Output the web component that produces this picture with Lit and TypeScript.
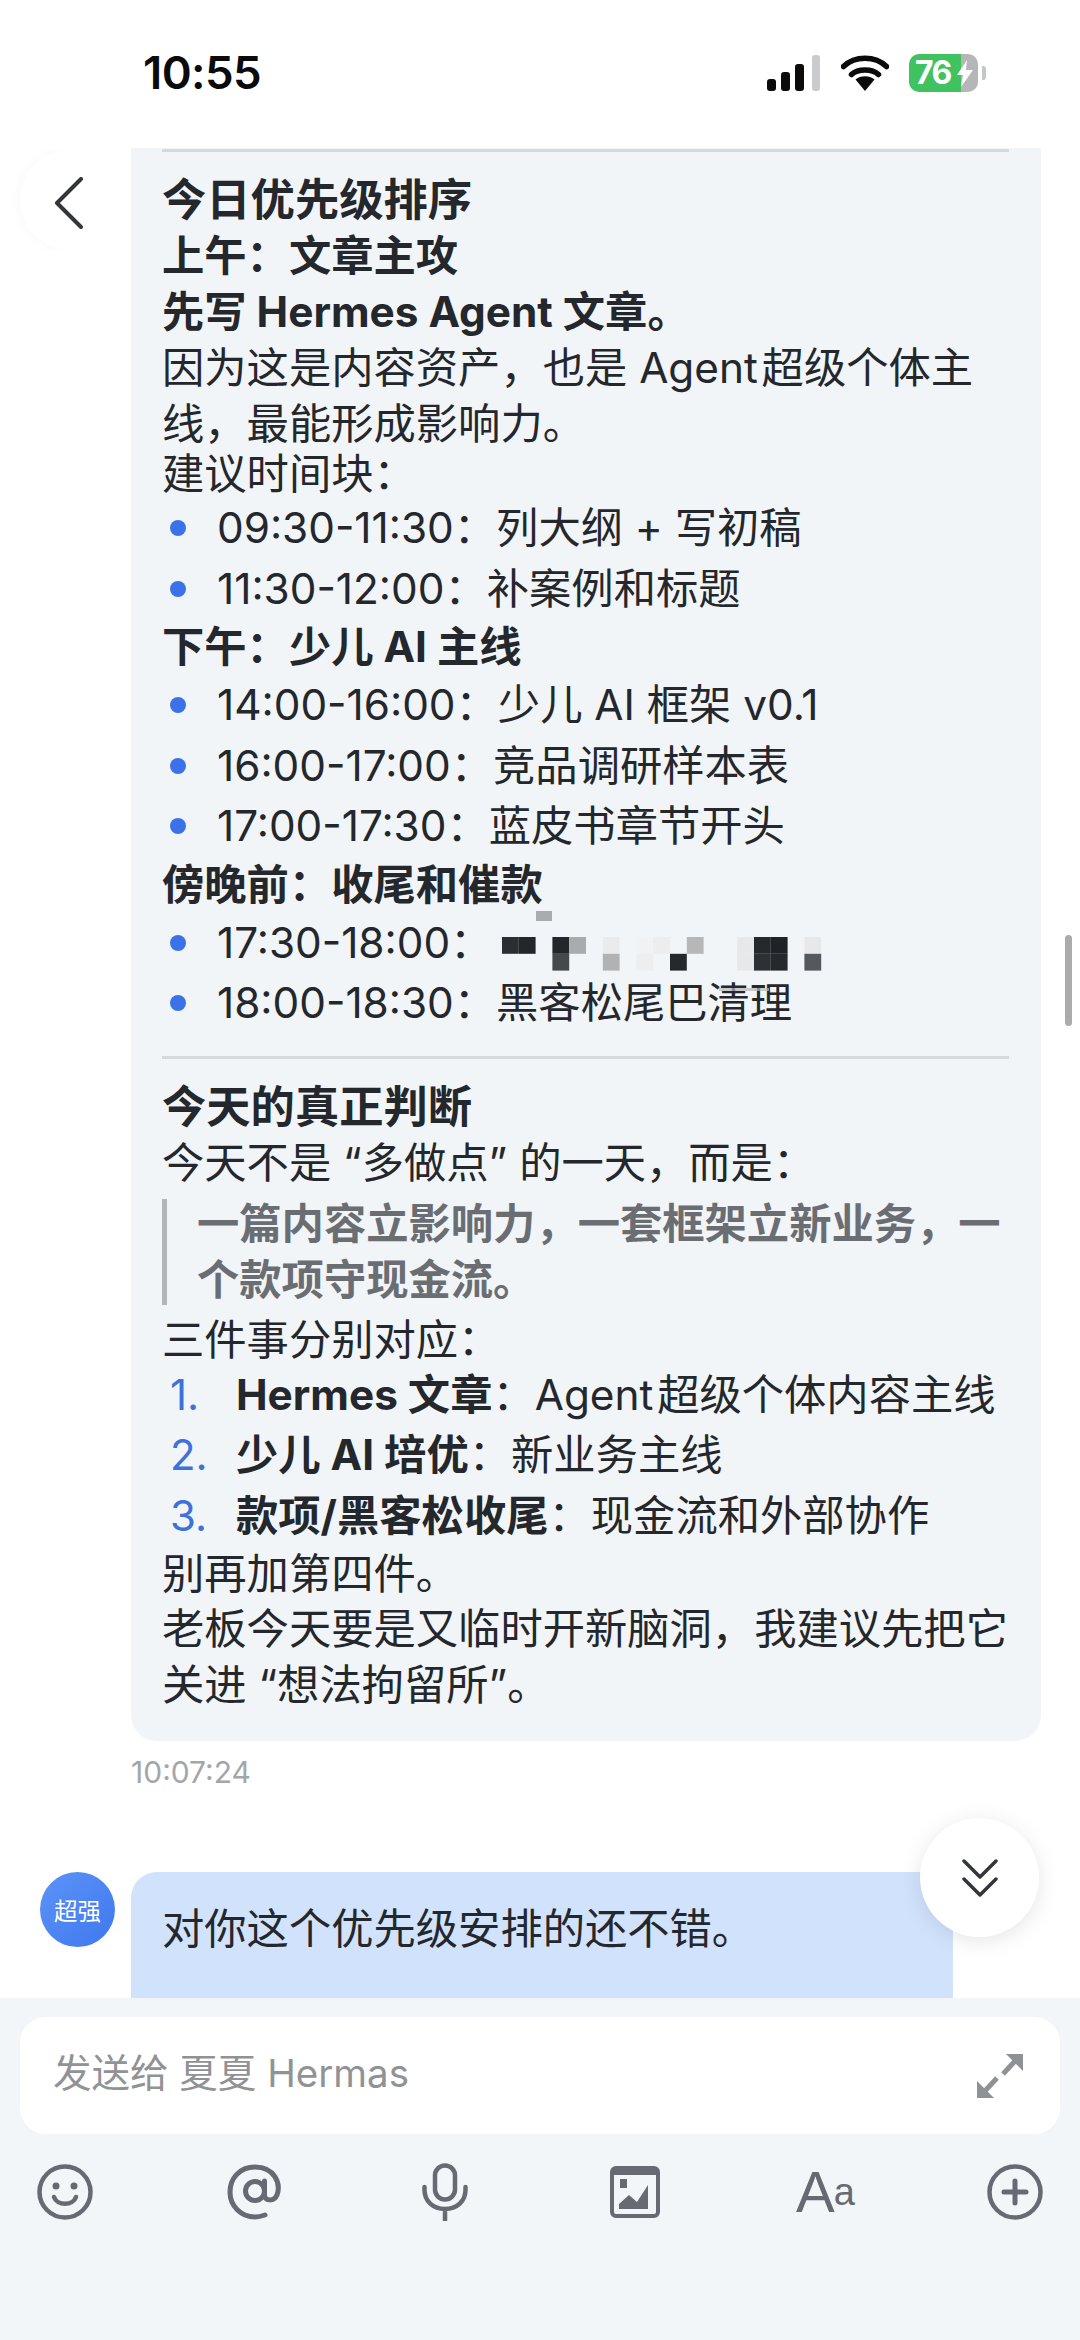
import { LitElement, html, css, svg } from "lit";
import { customElement } from "lit/decorators.js";

const mosaic: [number, number, string][] = [
  [0, 0, "#2b2e33"], [1, 0, "#23262b"], [3, 0, "#23262b"], [3, 1, "#45484c"], [4, 0, "#a9abad"],
  [6, 0, "#e9ebed"], [6, 1, "#b0b2b4"], [8, 0, "#f0f2f4"], [8, 1, "#eceef0"], [9, 0, "#ebedef"],
  [10, 1, "#25282d"], [11, 0, "#b5b7b9"], [14, 0, "#e6e8ea"], [14, 1, "#e6e8ea"], [15, 0, "#25282d"],
  [15, 1, "#2d3035"], [16, 0, "#1f2227"], [16, 1, "#25282d"], [18, 0, "#e6e8ea"], [18, 1, "#55585c"],
];

@customElement("app-root")
export class AppRoot extends LitElement {
  static styles = css`
    :host {
      display: block;
      width: 1080px;
      height: 2340px;
      position: relative;
      overflow: hidden;
      background: #fff;
      color: #24272c;
      font-family: Inter, "Noto Sans CJK SC", sans-serif;
    }
    .page { display: flex; flex-direction: column; height: 2340px; }
    .status {
      flex: 0 0 148px;
      display: flex;
      justify-content: space-between;
      align-items: flex-start;
      padding: 53px 94px 0 143px;
      box-sizing: border-box;
    }
    .time { font-size: 45.500px; line-height: 40px; font-weight: 600; color: #0b0b0c; letter-spacing: -0.6px; }
    .sicons { display: flex; align-items: center; gap: 20px; height: 40px; }
    .battery {
      position: relative;
      width: 69px;
      height: 38px;
      border-radius: 10px;
      background: linear-gradient(90deg, #3fc25f 0 76%, #b4b6b8 76%);
      color: #fff;
      font-size: 32px;
      font-weight: 700;
      line-height: 38px;
      padding-left: 6px;
      box-sizing: border-box;
      letter-spacing: -1.500px;
    }
    .bolt { position: absolute; left: 47px; top: 6px; }
    .cap { width: 4px; height: 14px; border-radius: 0 3px 3px 0; background: #c4c6c8; margin-left: -16px; }
    .msgs { flex: 1; min-height: 0; overflow: hidden; }
    .bubble-wrap { margin: 0 39px 0 131px; }
    .bubble {
      background: #f1f5f8;
      border-radius: 0 0 26px 26px;
      padding: 1px 31px 3px;
      height: 1593px;
      box-sizing: border-box;
      font-size: 42.300px;
      line-height: 56px;
    }
    hr { border: 0; height: 3px; background: #d6d9dc; margin: 0 1px 0 0; }
    .h { font-size: 44.300px; font-weight: 700; }
    .b { font-weight: 700; }
    .p { white-space: nowrap; }
    .first { margin-top: 20px; }
    .tight { margin-top: -6px; }
    ul, ol { list-style: none; margin: 0; padding: 0; }
    li { display: flex; align-items: center; height: 60.500px; white-space: pre; }
    .ul-first { margin-top: -4px; }
    .dot { width: 16px; height: 16px; border-radius: 50%; background: #3c72e8; margin: 0 31px 0 8px; flex: none; }
    .num { width: 74px; flex: none; color: #3f72d8; font-size: 42px; padding-left: 8px; box-sizing: border-box; }
    .sec { margin-top: 0; }
    .late { margin-top: 0; }
    .hr2 { margin-top: 22px; }
    .h2 { margin-top: 20px; }
    .quote {
      border-left: 5px solid #b3b6b9;
      padding-left: 30px;
      margin: 8px 0 7px;
      color: #6a6e73;
      font-weight: 700;
      font-size: 42.300px;
      line-height: 56px;
      height: 106px;
      display: flex;
      flex-direction: column;
      justify-content: center;
    }
    .nums { margin-top: -3px; }
    .after { margin-top: -1px; }
    .stamp { font-size: 30px; line-height: 36px; color: #a3a6a9; margin: 13px 0 0 131px; }
    .row { display: flex; margin-top: 82px; }
    .avatar {
      width: 75px;
      height: 75px;
      margin: 0 16px 0 40px;
      border-radius: 50%;
      background: linear-gradient(135deg, #5c93f8, #3f78ee);
      color: #fff;
      font-size: 23.500px;
      display: flex;
      align-items: center;
      justify-content: center;
      flex: none;
    }
    .mine {
      width: 822px;
      height: 200px;
      border-radius: 26px 26px 0 0;
      background: #d1e2fd;
      padding: 29px 31px;
      box-sizing: border-box;
      font-size: 42.300px;
      line-height: 56px;
    }
    .composer { flex: 0 0 342px; background: #f2f6f8; padding: 19px 20px 0; box-sizing: border-box; }
    .input {
      height: 117px;
      width: 1040px;
      background: #fff;
      border-radius: 26px;
      display: flex;
      align-items: center;
      justify-content: space-between;
      padding: 0 36px 0 33px;
      box-sizing: border-box;
      color: #909396;
      font-size: 38.500px;
    }
    .ph { padding-bottom: 12px; }
    .tools {
      display: flex;
      justify-content: space-between;
      align-items: center;
      margin: 29px 17px 0 17px;
      height: 58px;
      color: #666a72;
    }
    .tool { width: 56px; height: 58px; display: flex; align-items: center; justify-content: center; }
    .aa { font-family: "Liberation Sans", sans-serif; line-height: 58px; white-space: nowrap; letter-spacing: -1px; }
    .aa .A { font-size: 58px; }
    .aa .a { font-size: 38px; }
    .back {
      position: absolute;
      left: 20px;
      top: 150px;
      width: 100px;
      height: 100px;
      border-radius: 50%;
      box-shadow: -3px 0 12px rgba(0, 0, 0, 0.025);
      background: #fff;
      clip-path: inset(0 50px 0 -20px);
    }
    .chev { position: absolute; left: 54px; top: 177px; }
    .godown {
      position: absolute;
      left: 920px;
      top: 1818px;
      width: 119px;
      height: 119px;
      border-radius: 50%;
      background: #fff;
      box-shadow: 0 4px 22px rgba(0, 0, 0, 0.1);
      display: flex;
      align-items: center;
      justify-content: center;
    }
    .scroll { position: absolute; left: 1065px; top: 935px; width: 7px; height: 91px; border-radius: 4px; background: #a9abad; }
    .mosaic { position: absolute; left: 502px; top: 905px; }
  `;

  li(t: string, rest: string) {
    return html`<li><span class="dot"></span>${t}：${rest}</li>`;
  }

  render() {
    const c = 16.8;
    return html`
      <div class="page">
        <div class="status">
          <div class="time">10:55</div>
          <div class="sicons">
            <svg width="54" height="36" viewBox="0 0 54 36">
              <rect x="0" y="24" width="9" height="12" rx="3" fill="#0b0b0c" />
              <rect x="14" y="17" width="9" height="19" rx="3" fill="#0b0b0c" />
              <rect x="28" y="9" width="9" height="27" rx="3" fill="#0b0b0c" />
              <rect x="45" y="0" width="8" height="36" rx="3" fill="#c9cbcd" />
            </svg>
            <svg width="48" height="36" viewBox="0 0 48 36" fill="none">
              <path d="M2.500 11.500C14 0.500 34 0.500 45.500 11.500" stroke="#0b0b0c" stroke-width="5.500" stroke-linecap="round" />
              <path d="M10.500 19.500C17 13.500 31 13.500 37.500 19.500" stroke="#0b0b0c" stroke-width="5.500" stroke-linecap="round" />
              <path d="M14.500 24.500C19 20 29 20 33.500 24.500L24 36Z" fill="#0b0b0c" />
            </svg>
            <div class="battery">76<svg class="bolt" width="18" height="27" viewBox="0 0 18 27"><path d="M11 0L1 15h6L5 27 17 10h-7z" fill="#fff" /></svg></div>
            <div class="cap"></div>
          </div>
        </div>
        <div class="msgs">
          <div class="bubble-wrap">
            <div class="bubble">
              <hr />
              <div class="p h first">今日优先级排序</div>
              <div class="p b">上午：文章主攻</div>
              <div class="p b">先写 Hermes Agent 文章。</div>
              <div class="p">因为这是内容资产，也是 Agent\u200a超级个体主</div>
              <div class="p">线，最能形成影响力。</div>
              <div class="p tight">建议时间块：</div>
              <ul class="ul-first">
                ${this.li("09:30-11:30", "列大纲 + 写初稿")}
                ${this.li("11:30-12:00", "补案例和标题")}
              </ul>
              <div class="p b sec">下午：少儿 AI 主线</div>
              <ul>
                ${this.li("14:00-16:00", "少儿 AI 框架 v0.1")}
                ${this.li("16:00-17:00", "竞品调研样本表")}
                ${this.li("17:00-17:30", "蓝皮书章节开头")}
              </ul>
              <div class="p b late">傍晚前：收尾和催款</div>
              <ul>
                ${this.li("17:30-18:00", "")}
                ${this.li("18:00-18:30", "黑客松尾巴清理")}
              </ul>
              <hr class="hr2" />
              <div class="p h h2">今天的真正判断</div>
              <div class="p">今天不是 “多做点” 的一天，而是：</div>
              <div class="quote">
                <div class="p">一篇内容立影响力，一套框架立新业务，一</div>
                <div class="p">个款项守现金流。</div>
              </div>
              <div class="p">三件事分别对应：</div>
              <ol class="nums">
                <li><span class="num">1.</span><span class="b">Hermes 文章</span>：Agent\u200a超级个体内容主线</li>
                <li><span class="num">2.</span><span class="b">少儿 AI 培优</span>：新业务主线</li>
                <li><span class="num">3.</span><span class="b">款项/黑客松收尾</span>：现金流和外部协作</li>
              </ol>
              <div class="p">别再加第四件。</div>
              <div class="p after">老板今天要是又临时开新脑洞，我建议先把它</div>
              <div class="p">关进 “想法拘留所”。</div>
            </div>
          </div>
          <div class="stamp">10:07:24</div>
          <div class="row">
            <div class="avatar">超强</div>
            <div class="mine">对你这个优先级安排的还不错。</div>
          </div>
        </div>
        <div class="composer">
          <div class="input">
            <span class="ph">发送给 夏夏 Hermas</span>
            <svg width="48" height="46" viewBox="0 0 48 46" fill="#8f9295" stroke="none">
              <path d="M30 1H47V18Z" />
              <path d="M1 28V45H18Z" />
              <path d="M40 7L27 21M8 39L21 25" fill="none" stroke="#8f9295" stroke-width="5" />
            </svg>
          </div>
          <div class="tools">
            <div class="tool">
              <svg width="56" height="56" viewBox="0 0 56 56" fill="none" stroke="currentColor" stroke-width="4.500">
                <circle cx="28" cy="28" r="25.500" />
                <circle cx="19" cy="22" r="3.500" fill="currentColor" stroke="none" />
                <circle cx="37" cy="22" r="3.500" fill="currentColor" stroke="none" />
                <path d="M17 33C20 42 36 42 39 33" stroke-linecap="round" />
              </svg>
            </div>
            <div class="tool">
              <svg width="56" height="56" viewBox="0 0 56 56" fill="none" stroke="currentColor" stroke-width="5">
                <circle cx="28" cy="27" r="9.500" />
                <path d="M37.500 17V31C37.500 37 47 38 50 31C54 20 48 3 28 3C12 3 3 15 3 28C3 42 14 53 28 53C32 53 35 52 38 51" stroke-linecap="round" />
              </svg>
            </div>
            <div class="tool">
              <svg width="46" height="58" viewBox="0 0 46 58" fill="none" stroke="currentColor" stroke-width="4.500">
                <rect x="13" y="2.500" width="20" height="34" rx="10" />
                <path d="M2.500 24V27C2.500 38 11 46 23 46C35 46 43.500 38 43.500 27V24M23 46V57" stroke-linecap="round" />
              </svg>
            </div>
            <div class="tool">
              <svg width="50" height="52" viewBox="0 0 50 52">
                <rect x="2" y="2" width="46" height="48" rx="4" fill="none" stroke="currentColor" stroke-width="4" />
                <rect x="2" y="2" width="46" height="7" fill="currentColor" />
                <rect x="10" y="13" width="7" height="9" fill="currentColor" />
                <path d="M9 43V38L19 29L27 36L38 19V43Z" fill="currentColor" />
              </svg>
            </div>
            <div class="tool aa"><span class="A">A</span><span class="a">a</span></div>
            <div class="tool">
              <svg width="56" height="56" viewBox="0 0 56 56" fill="none" stroke="currentColor" stroke-width="4.500">
                <circle cx="28" cy="28" r="25.500" />
                <path d="M28 17V39M17 28H39" stroke-width="5" stroke-linecap="round" />
              </svg>
            </div>
          </div>
        </div>
      </div>
      <div class="back"></div>
      <svg class="chev" width="30" height="52" viewBox="0 0 30 52" fill="none" stroke="#33363b" stroke-width="4" stroke-linecap="round" stroke-linejoin="round">
        <path d="M27 2L3 26L27 50" />
      </svg>
      <svg class="mosaic" width="330" height="130" viewBox="0 0 330 130">
        <rect x="34" y="6" width="16" height="10" fill="#a9abad" />
        <rect x="217" y="83" width="50" height="3" fill="#b5b7b9" opacity="0.7" />
        <g transform="translate(0 32)">
          ${mosaic.map(([x, y, f]) => svg`<rect x=${x * c} y=${y * c} width=${c} height=${c} fill=${f} />`)}
        </g>
      </svg>
      <div class="godown">
        <svg width="38" height="38" viewBox="0 0 38 38" fill="none" stroke="#33363b" stroke-width="3.500" stroke-linecap="round" stroke-linejoin="round">
          <path d="M3 2L19 18L35 2M3 20L19 36L35 20" />
        </svg>
      </div>
      <div class="scroll"></div>
    `;
  }
}
